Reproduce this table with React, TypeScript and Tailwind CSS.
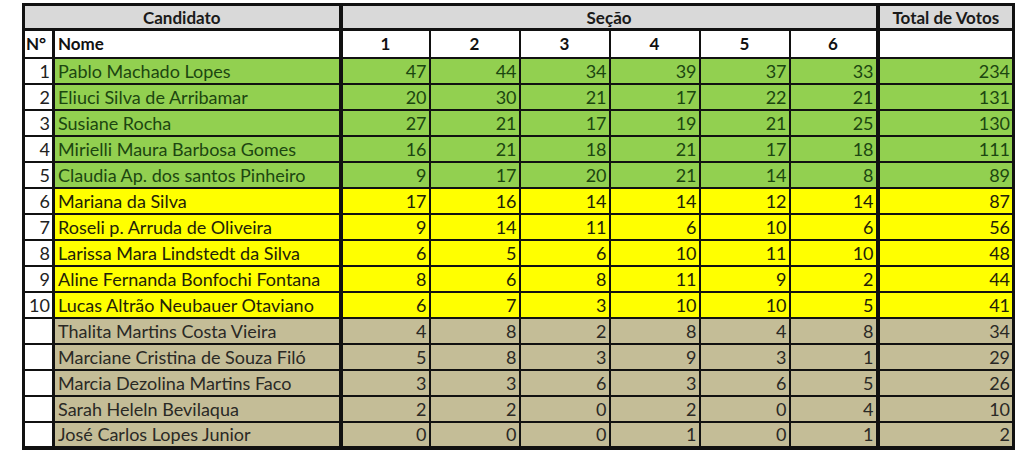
import React from "react";

type Row = { n: string; name: string; v: number[]; t: number; kind: "g" | "y" | "t" };

const rows: Row[] = [
  { n: "1", name: "Pablo Machado Lopes", v: [47, 44, 34, 39, 37, 33], t: 234, kind: "g" },
  { n: "2", name: "Eliuci Silva de Arribamar", v: [20, 30, 21, 17, 22, 21], t: 131, kind: "g" },
  { n: "3", name: "Susiane Rocha", v: [27, 21, 17, 19, 21, 25], t: 130, kind: "g" },
  { n: "4", name: "Mirielli Maura Barbosa Gomes", v: [16, 21, 18, 21, 17, 18], t: 111, kind: "g" },
  { n: "5", name: "Claudia Ap. dos santos Pinheiro", v: [9, 17, 20, 21, 14, 8], t: 89, kind: "g" },
  { n: "6", name: "Mariana da Silva", v: [17, 16, 14, 14, 12, 14], t: 87, kind: "y" },
  { n: "7", name: "Roseli p. Arruda de Oliveira", v: [9, 14, 11, 6, 10, 6], t: 56, kind: "y" },
  { n: "8", name: "Larissa Mara Lindstedt da Silva", v: [6, 5, 6, 10, 11, 10], t: 48, kind: "y" },
  { n: "9", name: "Aline Fernanda Bonfochi Fontana", v: [8, 6, 8, 11, 9, 2], t: 44, kind: "y" },
  { n: "10", name: "Lucas Altrão Neubauer Otaviano", v: [6, 7, 3, 10, 10, 5], t: 41, kind: "y" },
  { n: "", name: "Thalita Martins Costa Vieira", v: [4, 8, 2, 8, 4, 8], t: 34, kind: "t" },
  { n: "", name: "Marciane Cristina de Souza Filó", v: [5, 8, 3, 9, 3, 1], t: 29, kind: "t" },
  { n: "", name: "Marcia Dezolina Martins Faco", v: [3, 3, 6, 3, 6, 5], t: 26, kind: "t" },
  { n: "", name: "Sarah Heleln Bevilaqua", v: [2, 2, 0, 2, 0, 4], t: 10, kind: "t" },
  { n: "", name: "José Carlos Lopes Junior", v: [0, 0, 0, 1, 0, 1], t: 2, kind: "t" },
];

const bgCls = { g: "bg-[#92d050] text-[#1c4610]", y: "bg-[#ffff00] text-[#222208]", t: "bg-[#c4bd97] text-[#2a2925]" };

export default function App() {
  return (
    <div className="w-[1022px] h-[463px] bg-white overflow-hidden" style={{ fontFamily: "Lato, 'Open Sans', sans-serif" }}>
      <table className="ml-[22px] mt-[3px] border-collapse table-fixed w-[993px] text-[18px] leading-none">
        <colgroup>
          <col className="w-[30px]" />
          <col className="w-[287px]" />
          <col className="w-[89px]" />
          <col className="w-[90px]" />
          <col className="w-[90px]" />
          <col className="w-[90px]" />
          <col className="w-[90px]" />
          <col className="w-[88px]" />
          <col className="w-[136px]" />
        </colgroup>
        <tbody>
          <tr className="h-[25px] bg-[#d9d9d9] font-bold text-[#1a1a1a] text-[17px]">
            <td colSpan={2} className="text-center border-[3px] border-[#111] border-r-4 p-0">Candidato</td>
            <td colSpan={6} className="text-center border-[3px] border-[#111] border-r-4 p-0">Seção</td>
            <td className="text-center border-[3px] border-[#111] p-0 whitespace-nowrap">Total de Votos</td>
          </tr>
          <tr className="h-[28px] bg-white font-bold text-[#111] text-[17px]">
            <td className="border-l-[3px] border-r-[3px] border-b-2 border-[#111] pl-[1px] text-left">N°</td>
            <td className="border-r-4 border-b-2 border-[#111] pl-[3px] text-left">Nome</td>
            {[1, 2, 3, 4, 5, 6].map((c) => (
              <td key={c} className={`border-b-2 border-[#111] text-center ${c === 6 ? "border-r-4" : "border-r-2"}`}>{c}</td>
            ))}
            <td className="border-r-[3px] border-b-2 border-[#111]"></td>
          </tr>
          {rows.map((r, i) => {
            const last = i === rows.length - 1;
            const bb = last ? "border-b-4" : "border-b-2";
            return (
              <tr key={i} className="h-[26px]">
                <td className={`bg-white text-[#222] text-right pr-[2px] border-l-[3px] border-r-[3px] ${bb} border-[#111]`}>{r.n}</td>
                <td className={`${bgCls[r.kind]} text-left pl-[3px] whitespace-nowrap border-r-4 ${bb} border-[#111]`}>{r.name}</td>
                {r.v.map((x, j) => (
                  <td key={j} className={`${bgCls[r.kind]} text-right pr-[2px] ${bb} border-[#111] ${j === 5 ? "border-r-4" : "border-r-2"}`}>{x}</td>
                ))}
                <td className={`${bgCls[r.kind]} text-right pr-[2px] border-r-[3px] ${bb} border-[#111]`}>{r.t}</td>
              </tr>
            );
          })}
        </tbody>
      </table>
    </div>
  );
}
